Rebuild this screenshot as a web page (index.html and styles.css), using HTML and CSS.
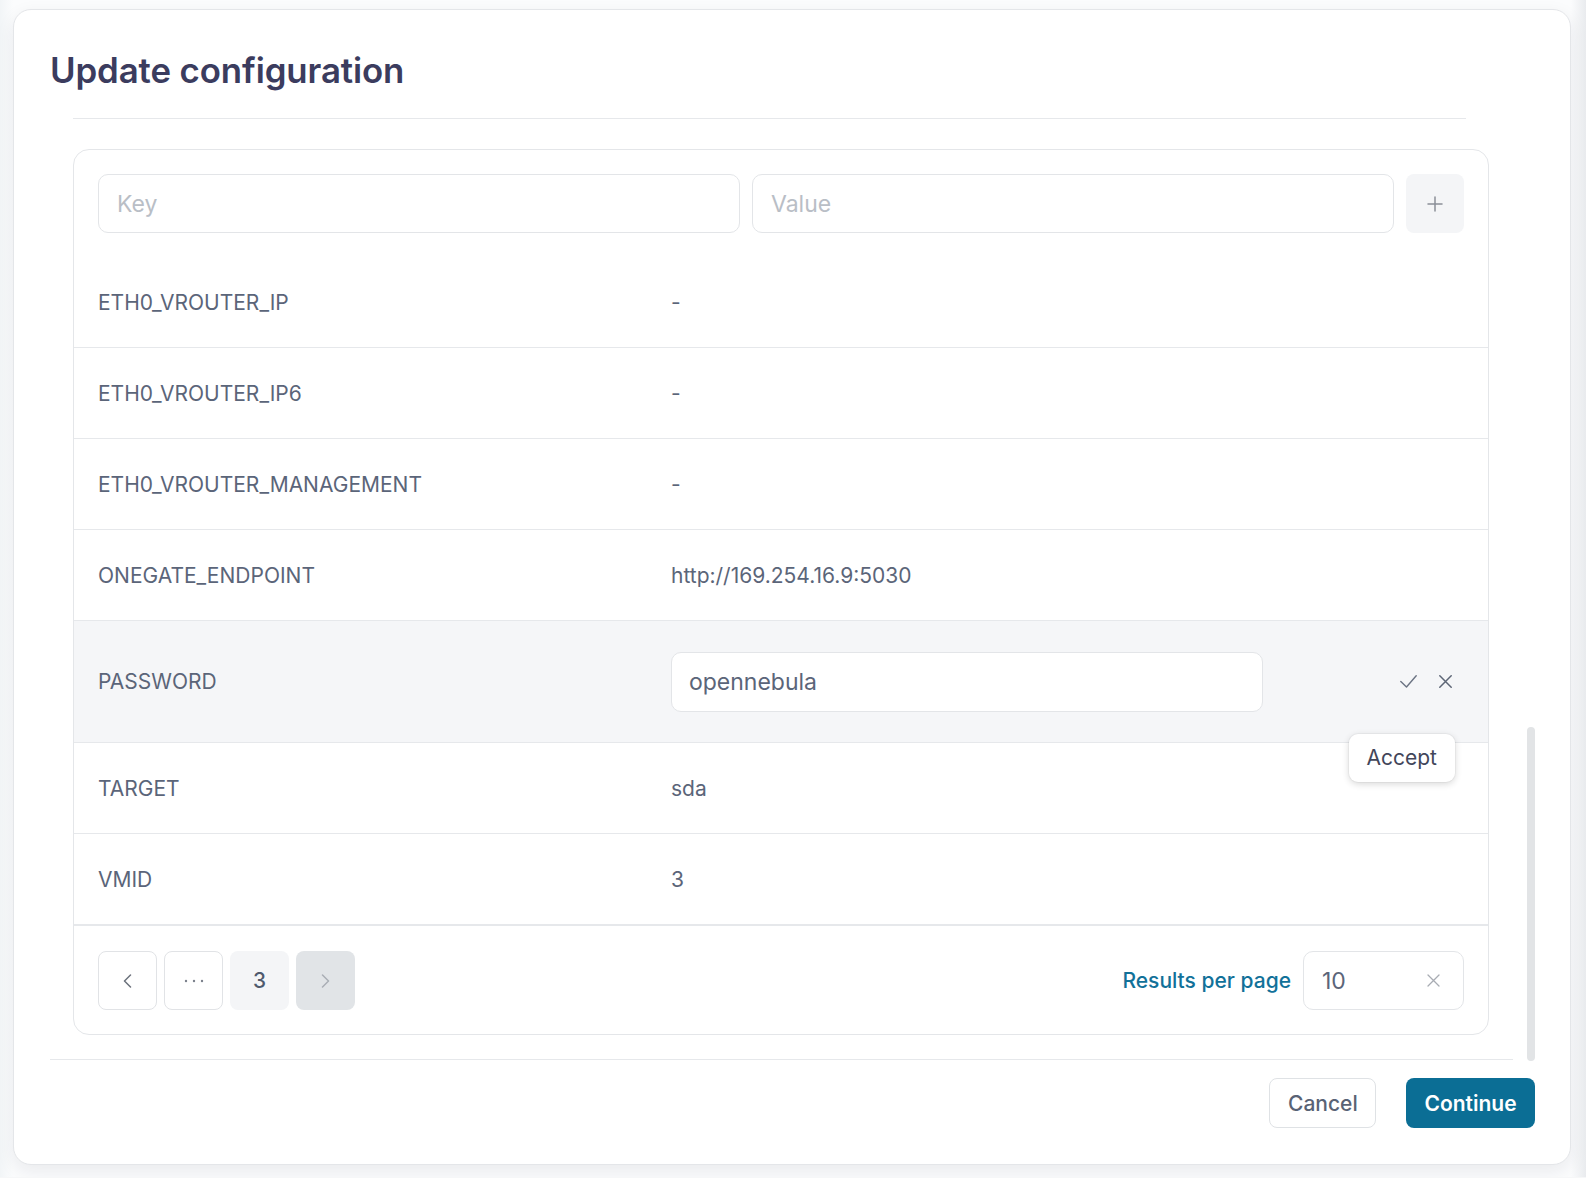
FILE: index.html
```html
<!DOCTYPE html>
<html lang="en">
<head>
<meta charset="utf-8">
<title>Update configuration</title>
<link rel="stylesheet" href="styles.css">
</head>
<body>
<div class="backdrop">
  <div class="dialog">
    <h1 class="title">Update configuration</h1>
    <div class="content">
      <div class="top-rule"></div>
      <div class="card">
        <div class="add-row">
          <input class="field" type="text" placeholder="Key">
          <input class="field" type="text" placeholder="Value">
          <button class="add-btn" type="button" aria-label="Add">
            <svg width="16" height="16" viewBox="0 0 16 16"><path d="M8 1v14M1 8h14" stroke="#8a8f98" stroke-width="1.5" fill="none" stroke-linecap="round"/></svg>
          </button>
        </div>
        <div class="rows">
          <div class="row"><span class="k">ETH0_VROUTER_IP</span><span class="v">-</span></div>
          <div class="row"><span class="k">ETH0_VROUTER_IP6</span><span class="v">-</span></div>
          <div class="row"><span class="k">ETH0_VROUTER_MANAGEMENT</span><span class="v">-</span></div>
          <div class="row"><span class="k">ONEGATE_ENDPOINT</span><span class="v">http://169.254.16.9:5030</span></div>
          <div class="row editing">
            <span class="k">PASSWORD</span>
            <span class="v"><input class="field edit-field" type="text" value="opennebula"></span>
            <span class="row-actions">
              <button class="icon-btn" type="button" aria-label="Accept">
                <svg width="17" height="13" viewBox="0 0 17 13"><polyline points="0.8,6.5 6.5,12 16.2,0.8" stroke="#6b7383" stroke-width="1.4" fill="none" stroke-linejoin="round" stroke-linecap="round"/></svg>
              </button>
              <button class="icon-btn" type="button" aria-label="Cancel">
                <svg width="13" height="13" viewBox="0 0 13 13"><path d="M0.8 0.8L12.2 12.2M12.2 0.8L0.8 12.2" stroke="#5d6676" stroke-width="1.5" fill="none" stroke-linecap="round"/></svg>
              </button>
            </span>
            <div class="tooltip">Accept</div>
          </div>
          <div class="row"><span class="k">TARGET</span><span class="v">sda</span></div>
          <div class="row last"><span class="k">VMID</span><span class="v">3</span></div>
        </div>
        <div class="pager">
          <div class="pages">
            <button class="pg pg-outline" type="button" aria-label="Previous">
              <svg width="9" height="14" viewBox="0 0 9 14"><polyline points="7.5,1 1.5,7 7.5,13" stroke="#6b717c" stroke-width="1.5" fill="none" stroke-linecap="round" stroke-linejoin="round"/></svg>
            </button>
            <button class="pg pg-outline" type="button" aria-label="More">
              <svg width="20" height="4" viewBox="0 0 20 4"><circle cx="2" cy="2" r="1.2" fill="#7b818c"/><circle cx="10" cy="2" r="1.2" fill="#7b818c"/><circle cx="18" cy="2" r="1.2" fill="#7b818c"/></svg>
            </button>
            <button class="pg pg-current" type="button">3</button>
            <button class="pg pg-disabled" type="button" aria-label="Next">
              <svg width="9" height="14" viewBox="0 0 9 14"><polyline points="1.5,1 7.5,7 1.5,13" stroke="#a9aeb5" stroke-width="1.5" fill="none" stroke-linecap="round" stroke-linejoin="round"/></svg>
            </button>
          </div>
          <div class="per-page">
            <span class="per-label">Results per page</span>
            <div class="select">
              <span class="select-val">10</span>
              <svg width="13" height="13" viewBox="0 0 13 13"><path d="M1 1L12 12M12 1L1 12" stroke="#a8acb3" stroke-width="1.3" fill="none" stroke-linecap="round"/></svg>
            </div>
          </div>
        </div>
      </div>
    </div>
    <div class="scroll-thumb"></div>
    <div class="actions">
      <button class="btn btn-cancel" type="button">Cancel</button>
      <button class="btn btn-primary" type="button">Continue</button>
    </div>
  </div>
</div>
</body>
</html>
```

FILE: styles.css
```css
html, body {
  margin: 0;
  padding: 0;
}

body {
  background: #f6f7f8;
  font-family: Inter, "Noto Sans", "Liberation Sans", sans-serif;
  color: #5b6579;
}

.backdrop {
  padding: 9px 15px 12px 13px;
  background: linear-gradient(90deg, #f2f5f7 0, #fbfcfd 13px, #fbfcfd calc(100% - 15px), #e9ebee 100%);
}

.dialog {
  position: relative;
  background: #fff;
  border: 1px solid #e4e6e9;
  border-radius: 18px;
  box-shadow: 0 6px 18px rgba(20, 30, 50, 0.08);
}

.title {
  margin: 0;
  padding: 39px 36px 0;
  font-size: 34.8px;
  line-height: 42px;
  font-weight: 600;
  color: #3b3c5e;
  letter-spacing: -0.1px;
}

.content {
  margin: 0 57px 0 36px;
  padding: 0 24px 24px 23px;
  border-bottom: 1px solid #e6e8eb;
}

.top-rule {
  height: 1px;
  background: #e6e8eb;
  margin: 27px 23px 30px 0;
}

.card {
  border: 1px solid #e4e6e9;
  border-radius: 16px;
}

.add-row {
  display: grid;
  grid-template-columns: 1fr 1fr 58px;
  gap: 12px;
  padding: 24px 24px 0;
}

.field {
  box-sizing: border-box;
  width: 100%;
  height: 59px;
  margin: 0;
  border: 1px solid #e3e5e8;
  border-radius: 10px;
  padding: 0 18px;
  background: #fff;
  font-family: Inter, "Noto Sans", sans-serif;
  font-size: 23px;
  color: #5b6579;
  outline: none;
}

.field::placeholder {
  color: #b9bec6;
}

.add-btn {
  height: 59px;
  border: 0;
  border-radius: 8px;
  background: #f4f5f7;
  display: flex;
  align-items: center;
  justify-content: center;
  padding: 0;
}

.rows {
  margin-top: 24px;
}

.row {
  position: relative;
  display: grid;
  grid-template-columns: 573px 1fr auto;
  align-items: center;
  height: 90px;
  padding: 0 24px;
  border-bottom: 1px solid #e6e8eb;
  font-size: 21px;
  color: #5b6579;
}

.row.editing {
  height: 121px;
  background: #f5f6f8;
}

.edit-field {
  display: block;
  width: 592px;
  height: 60px;
  padding: 0 17px;
}

.row-actions {
  display: flex;
}

.icon-btn {
  width: 37px;
  height: 37px;
  border: 0;
  padding: 0;
  background: transparent;
  display: flex;
  align-items: center;
  justify-content: center;
}

.tooltip {
  position: absolute;
  top: 113px;
  right: 33px;
  z-index: 2;
  padding: 12px 18px;
  font-size: 21px;
  line-height: 24px;
  color: #42465a;
  background: #fff;
  border-radius: 9px;
  box-shadow: 0 2px 7px rgba(0, 0, 0, 0.16), 0 0 0 1px rgba(0, 0, 0, 0.03);
}

.row.last {
  border-bottom-width: 2px;
}

.pager {
  display: flex;
  justify-content: space-between;
  align-items: center;
  padding: 25px 24px 24px;
}

.pages {
  display: flex;
  gap: 7px;
}

.pg {
  box-sizing: border-box;
  width: 59px;
  height: 59px;
  border-radius: 8px;
  display: flex;
  align-items: center;
  justify-content: center;
  padding: 0;
  font-family: Inter, "Noto Sans", sans-serif;
  font-size: 20.8px;
  color: #4f5a6d;
}

.pg-outline {
  background: #fff;
  border: 1px solid #e1e3e6;
}

.pg-current {
  background: #f4f5f7;
  border: 0;
  font-weight: 500;
}

.pg-disabled {
  background: #e1e4e7;
  border: 0;
}

.per-page {
  display: flex;
  align-items: center;
  gap: 12px;
}

.per-label {
  font-size: 21px;
  font-weight: 500;
  color: #127199;
}

.select {
  box-sizing: border-box;
  width: 161px;
  height: 59px;
  border: 1px solid #e3e5e8;
  border-radius: 10px;
  display: flex;
  align-items: center;
  justify-content: space-between;
  padding: 0 23px 0 18px;
}

.select-val {
  font-size: 23px;
  color: #5b6579;
}

.scroll-thumb {
  position: absolute;
  left: 1513px;
  top: 717px;
  width: 8px;
  height: 334px;
  border-radius: 4px;
  background: #e2e4e6;
}

.actions {
  display: flex;
  justify-content: flex-end;
  gap: 30px;
  padding: 18px 35px 36px 0;
}

.btn {
  box-sizing: border-box;
  height: 50px;
  border-radius: 8px;
  font-family: Inter, "Noto Sans", sans-serif;
  font-size: 21px;
  padding: 0 18px;
}

.btn-cancel {
  width: 107px;
  background: #fff;
  border: 1px solid #dfe2e5;
  color: #596375;
  font-weight: 500;
}

.btn-primary {
  width: 129px;
  background: #0b6e95;
  border: 0;
  color: #fff;
  font-weight: 600;
}
```
